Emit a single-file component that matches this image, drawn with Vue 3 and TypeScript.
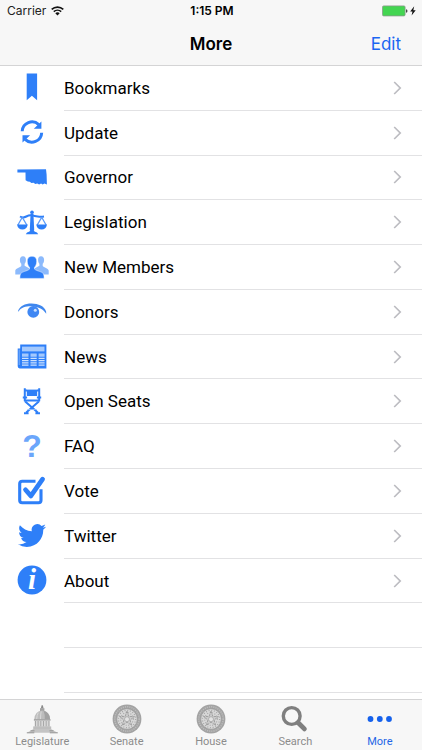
<script setup lang="ts">
type IconName =
  | 'bookmark' | 'refresh' | 'state' | 'scales' | 'people' | 'eye'
  | 'newspaper' | 'chair' | 'question' | 'check' | 'bird' | 'info'

interface MenuItem {
  label: string
  icon: IconName
}

interface Tab {
  label: string
  icon: 'capitol' | 'seal' | 'search' | 'dots'
  active?: boolean
}

const items: MenuItem[] = [
  { label: 'Bookmarks', icon: 'bookmark' },
  { label: 'Update', icon: 'refresh' },
  { label: 'Governor', icon: 'state' },
  { label: 'Legislation', icon: 'scales' },
  { label: 'New Members', icon: 'people' },
  { label: 'Donors', icon: 'eye' },
  { label: 'News', icon: 'newspaper' },
  { label: 'Open Seats', icon: 'chair' },
  { label: 'FAQ', icon: 'question' },
  { label: 'Vote', icon: 'check' },
  { label: 'Twitter', icon: 'bird' },
  { label: 'About', icon: 'info' },
]

const tabs: Tab[] = [
  { label: 'Legislature', icon: 'capitol' },
  { label: 'Senate', icon: 'seal' },
  { label: 'House', icon: 'seal' },
  { label: 'Search', icon: 'search' },
  { label: 'More', icon: 'dots', active: true },
]
</script>

<template>
  <div class="screen">
    <header class="top">
      <div class="status">
        <div class="carrier">
          <span>Carrier</span>
          <svg width="13" height="10" viewBox="0 0 13 10" aria-hidden="true">
            <g fill="none" stroke="#111" stroke-width="1.6">
              <path d="M.7 3.4a8.4 8.4 0 0 1 11.6 0" />
              <path d="M2.8 5.7a5.4 5.4 0 0 1 7.4 0" />
            </g>
            <path d="M4.3 7.3a3.2 3.2 0 0 1 4.4 0L6.5 9.6z" fill="#111" />
          </svg>
        </div>
        <time class="clock">1:15 PM</time>
        <div class="power">
          <svg width="35" height="12" viewBox="0 0 35 12" aria-hidden="true">
            <rect x=".5" y=".9" width="22.6" height="10" rx="1.2" fill="#43d551" stroke="#8a9a8c" stroke-width=".8" />
            <path d="M24 4.2q1.5.3 1.5 1.8T24 7.8z" fill="#444" />
            <path d="M32.2 1.3 28.2 6.6h2.3l-.9 4 4.1-5.4h-2.4z" fill="#111" />
          </svg>
        </div>
      </div>
      <div class="titlebar">
        <h1>More</h1>
        <button type="button" class="edit">Edit</button>
      </div>
    </header>

    <ul class="list">
      <li v-for="item in items" :key="item.label">
        <a href="#" class="row">
          <svg class="icon" width="34" height="34" viewBox="0 0 34 34" aria-hidden="true">
            <path v-if="item.icon === 'bookmark'" d="M11.7 2.5h10.4v26.7l-5.2-4.5-5.2 4.5z" />

            <g v-else-if="item.icon === 'refresh'">
              <g fill="none" stroke="#2e7ff8" stroke-width="3">
                <path d="M7.2 15.2A9.8 9.8 0 0 1 23.8 8.6" />
                <path d="M26.7 16.8A9.8 9.8 0 0 1 10.1 23.4" />
              </g>
              <path d="M26.4 5.4v7.4h-7.6zM7.5 26.6v-7.4h7.6z" />
            </g>

            <path
              v-else-if="item.icon === 'state'"
              d="M2.4 8.5 31 8.2l.6 5.4.3 9.9-2.4-1-1.9.9-1.5-.9-2 1-1.8-1.1-2 .6-1.7-1.2-2.2.2-1.6-1.3-2-.1-2.2-1.3-.1-7.9H2.4z"
            />

            <g v-else-if="item.icon === 'scales'">
              <circle cx="17" cy="6.3" r="1.8" />
              <path d="M15.6 7.5h2.8l.8 16.5h-4.4z" />
              <path d="M10.8 28.2q.6-2.2 3.7-2.7l1-2h3l1 2q3.1.5 3.7 2.7z" />
              <path d="M5 10.5q3 1.8 6.3 0T17 9.4t5.7 1.1 6.3 0" fill="none" stroke="#2e7ff8" stroke-width="2" />
              <g fill="none" stroke="#5c9cfa" stroke-width="1.3">
                <path d="M7.3 11.3 2.9 19M7.3 11.3l4.5 7.7M26.7 11.3 22.2 19M26.7 11.3l4.4 7.7" />
              </g>
              <path d="M2 18.4h10.8q-1 5-5.4 5T2 18.4zM21.2 18.4H32q-1 5-5.4 5t-5.4-5z" />
            </g>

            <g v-else-if="item.icon === 'people'">
              <g fill="#8cbafc">
                <path d="M8 5.2c2.2 0 3.1 1.7 2.9 4-.1 1.8-.7 2.9-1.3 3.6v1.9l5 2.7v6H.3v-3.8c.2-2 3.900-2.6 6-4.600v-2.200c-.7-.7-1.300-1.800-1.400-3.600-.2-2.300.9-4 3.100-4z" />
                <path d="M26 5.2c-2.200 0-3.100 1.700-2.900 4 .1 1.800.7 2.900 1.300 3.600v1.900l-5 2.700v6h14.300v-3.800c-.2-2-3.900-2.600-6-4.600v-2.200c.7-.7 1.300-1.800 1.400-3.600.2-2.300-.9-4-3.100-4z" />
              </g>
              <path
                d="M17 5.300c3.500 0 5 2.300 4.700 5.600-.2 2.600-1.100 4.300-2.200 5.300v1.900c2.600 2.300 8 2.400 9 4.800.6 1.400.6 3 .6 4.500H4.900c0-1.500 0-3.100.6-4.500 1-2.400 6.400-2.500 9-4.800v-1.900c-1.100-1-2-2.700-2.200-5.300-.3-3.300 1.200-5.600 4.700-5.600z"
                stroke="#fff" stroke-width=".5"
              />
            </g>

            <g v-else-if="item.icon === 'eye'">
              <path d="M2.9 16.5C4.5 11.2 10 8.6 16.5 8.6c7 0 12.8 2.7 14.6 7.9l.1 2.3C28.5 14.1 23.5 11.7 17 11.4 11.5 11.2 6.5 12.1 3.8 16.2z" fill="#3f87ee" />
              <circle cx="18.3" cy="16.9" r="5.9" fill="#3f87f3" />
              <circle cx="20.3" cy="15.2" r="1.5" fill="#c9e0ff" />
            </g>

            <g v-else-if="item.icon === 'newspaper'">
              <path d="M5.2 4.5h26.200v23.900H4.700q-2-.2-2-2.200V8.500h2.500z" />
              <path d="M4.2 9.500V25" stroke="#8dbbfc" stroke-width=".8" />
              <g fill="#a4c9fd">
                <path d="M7 6.600h22.500v4.800H7z" />
                <path d="M7 13.500h6.500v3.300H7zM15.500 13.500h6.200v3.300h-6.200zM23.600 13.500h6v3.300h-6z" />
              </g>
              <path
                d="M7 18.300h6.500M7 20.600h6.500M7 22.900h6.500M7 25.200h6.500M15.500 18.300h6.200M15.500 20.600h6.200M15.500 22.900h6.200M15.500 25.200h6.200M23.600 18.300h6M23.600 20.600h6M23.600 22.900h6M23.600 25.200h6"
                stroke="#cfe3fe" stroke-width="1.3"
              />
            </g>

            <g v-else-if="item.icon === 'chair'">
              <path d="M11.8 4.6h10.400v6.400H11.800z" />
              <g fill="none" stroke="#2e7ff8" stroke-width="2">
                <path d="M9.800 3.300v13M24.200 3.300v13M10 5.400h2M22 5.400h2" />
                <path d="M7.800 12.600h4.300M21.900 12.600h4.300M9 15.400h16" />
                <path d="M10.200 16.500 22.800 27.500M23.800 16.500 11.200 27.500M9 28.200h4.600M20.400 28.200H25" />
              </g>
              <path d="M12.500 24.500h9" stroke="#8cbafc" stroke-width="1" />
            </g>

            <text v-else-if="item.icon === 'question'" class="mark" x="17" y="27" text-anchor="middle">?</text>

            <g v-else-if="item.icon === 'check'" fill="none" stroke="#2e7ff8" stroke-linejoin="round">
              <path d="M20.5 7.2H7.2q-2.5 0-2.5 2.5v16.5q0 2.5 2.5 2.5h16.300q2.5 0 2.5-2.5v-11" stroke-width="3.1" />
              <path d="m10.5 15.8 5.4 6.100L27.600 5.200" stroke-width="4.7" stroke-linecap="round" />
            </g>

            <path
              v-else-if="item.icon === 'bird'"
              transform="translate(3 2.5) scale(1.17)"
              d="M23.953 4.57a10 10 0 01-2.825.775 4.958 4.958 0 002.163-2.723c-.951.555-2.005.959-3.127 1.184a4.92 4.92 0 00-8.384 4.482C7.69 8.095 4.067 6.13 1.64 3.162a4.822 4.822 0 00-.666 2.475c0 1.71.87 3.213 2.188 4.096a4.904 4.904 0 01-2.228-.616v.06a4.923 4.923 0 003.946 4.827 4.996 4.996 0 01-2.212.085 4.936 4.936 0 004.604 3.417 9.867 9.867 0 01-6.102 2.105c-.39 0-.779-.023-1.17-.067a13.995 13.995 0 007.557 2.209c9.053 0 13.998-7.496 13.998-13.985 0-.21 0-.42-.015-.63A9.935 9.935 0 0024 4.59z"
            />

            <g v-else>
              <circle cx="17" cy="16" r="14.4" />
              <text class="info" x="17" y="25" text-anchor="middle">i</text>
            </g>
          </svg>
          <span class="cell">
            <span class="label">{{ item.label }}</span>
            <svg width="9" height="14" viewBox="0 0 9 14" aria-hidden="true">
              <path d="m1.2 1 6 6-6 6" fill="none" stroke="#bcbcc1" stroke-width="1.7" />
            </svg>
          </span>
        </a>
      </li>
      <li v-for="n in 2" :key="n" class="row" aria-hidden="true">
        <span class="cell"></span>
      </li>
    </ul>

    <nav class="tabs">
      <a v-for="tab in tabs" :key="tab.label" href="#" class="tab" :class="{ active: tab.active }">
        <svg width="32" height="30" viewBox="0 0 32 30" aria-hidden="true">
          <g v-if="tab.icon === 'capitol'">
            <path d="M15.6 1.2h1.200l.8 3.200h-2.800z" fill="#8a8a8a" />
            <path d="M14 4.200h4.400v3H14z" fill="#a2a2a2" />
            <path d="M8.300 15.200q.6-8 7.900-8.600 7.300.6 7.900 8.600z" fill="#bdbdbd" />
            <path d="M17.500 6.700q6 1.200 6.600 8.500h-5.300q.3-5-1.300-8.500z" fill="#a2a2a2" />
            <path d="M12.300 8.700q-1.500 2.600-1.600 6.300M15.200 7.500q-.7 3-.7 7.500" stroke="#dcdcdc" stroke-width=".9" fill="none" />
            <path d="M7.900 15h16.600v1.800H7.900z" fill="#a9a9a9" />
            <path d="M8.500 16.800h15.400v6.200H8.500z" fill="#d8d8d8" />
            <path d="M9.500 17v5.500M12.100 17v5.500M14.800 17v5.500M17.500 17v5.500M20.200 17v5.500M22.900 17v5.500" stroke="#a2a2a2" stroke-width=".9" />
            <path d="M7.200 22.400h18v3.400h-18z" fill="#bebebe" />
            <path d="M1 28.800 7.500 25h17.400l6.600 3.800z" fill="#c4c4c4" />
            <path d="M.8 28.800h7.500M23.800 28.800h8M4.500 26.800h4M23.500 26.800h4" stroke="#959595" stroke-width="1" />
          </g>
          <g v-else-if="tab.icon === 'seal'">
            <circle cx="16" cy="15" r="14.4" fill="#a3a3a3" />
            <g fill="none">
              <circle cx="16" cy="15" r="12.2" stroke="#bcbcbc" stroke-width="1.5" stroke-dasharray="1.2 1" />
              <circle cx="16" cy="15" r="10.3" fill="#d8d8d8" stroke="#959595" stroke-width=".6" />
              <circle cx="16" cy="15" r="8.6" stroke="#a8a8a8" stroke-width="1.3" stroke-dasharray="1 1.7" />
              <circle cx="16" cy="15" r="6.3" stroke="#a8a8a8" stroke-width="1.1" stroke-dasharray="1 1.5" />
              <path
                d="m16 7.2 1.9 5.2 5.5.2-4.300 3.400 1.500 5.300-4.600-3-4.600 3 1.500-5.300-4.300-3.400 5.500-.2z"
                fill="#cbcbcb" stroke="#939393" stroke-width=".8" stroke-dasharray="2.5 .8"
              />
              <circle cx="16" cy="15.2" r="2.5" fill="#e3e3e3" stroke="#a0a0a0" stroke-width=".7" />
            </g>
          </g>
          <g v-else-if="tab.icon === 'search'" fill="none" stroke="#7f7f7f">
            <circle cx="12.7" cy="12" r="8.4" stroke-width="3.4" />
            <path d="m19.2 18.7 6.2 6.2" stroke-width="4.8" stroke-linecap="round" />
          </g>
          <g v-else fill="#1561ec">
            <circle cx="6.5" cy="15" r="2.9" />
            <circle cx="15.8" cy="15" r="2.9" />
            <circle cx="25" cy="15" r="2.9" />
          </g>
        </svg>
        <span>{{ tab.label }}</span>
      </a>
    </nav>
  </div>
</template>

<style>
body {
  margin: 0;
  background: #fff;
}
</style>

<style scoped>
.screen {
  display: flex;
  flex-direction: column;
  min-height: 100vh;
  background: #fff;
  color: #000;
  font-family: Inter, "Liberation Sans", sans-serif;
}

a {
  color: inherit;
  text-decoration: none;
}

.top {
  background: #f7f7f7;
  border-bottom: 1px solid #d4d4d5;
}

.status,
.titlebar {
  display: grid;
  grid-template-columns: 1fr auto 1fr;
  align-items: center;
}

.status {
  height: 22px;
  padding: 0 5px 0 7px;
  font-size: 12px;
  line-height: 16px;
}

.carrier {
  display: flex;
  align-items: center;
  gap: 5px;
  color: #222;
}

.clock {
  font-weight: 600;
}

.power {
  display: flex;
  justify-content: flex-end;
}

.titlebar {
  height: 43px;
  padding: 0 21px;
}

h1 {
  grid-column: 2;
  margin: 0;
  font-size: 17px;
  font-weight: 600;
  line-height: 22px;
}

.edit {
  justify-self: end;
  padding: 0;
  border: 0;
  background: none;
  color: #1b66f2;
  font: inherit;
  font-size: 17px;
  line-height: 22px;
}

.list {
  flex: 1;
  display: grid;
  grid-auto-rows: 1fr;
  margin: 0;
  padding: 0 0 6px;
  list-style: none;
}

.row {
  display: flex;
  align-items: center;
  height: 100%;
  padding-left: 15px;
  box-sizing: border-box;
}

.icon {
  flex: none;
  margin-right: 15px;
  overflow: visible;
  fill: #2e7ff8;
}

.cell {
  flex: 1;
  display: flex;
  align-items: center;
  justify-content: space-between;
  align-self: stretch;
  padding-right: 20px;
  border-bottom: 1px solid #e2e2e4;
}

li.row {
  padding-left: 64px;
}

.label {
  font-family: Roboto, "Liberation Sans", sans-serif;
  font-size: 17px;
  line-height: 22px;
}

.mark {
  fill: #6ba6fb;
  font: bold 32px "Liberation Sans", sans-serif;
}

.info {
  fill: #fff;
  font: italic bold 29px "Liberation Serif", serif;
}

.tabs {
  display: grid;
  grid-template-columns: repeat(5, 1fr);
  background: #f7f7f7;
  border-top: 1px solid #d4d4d5;
}

.tab {
  display: flex;
  flex-direction: column;
  align-items: center;
  padding: 4px 0 0;
  color: #8c8c8c;
  font-family: Roboto, "Liberation Sans", sans-serif;
  font-size: 11px;
  line-height: 16px;
}

.active {
  color: #1f66e6;
}
</style>
